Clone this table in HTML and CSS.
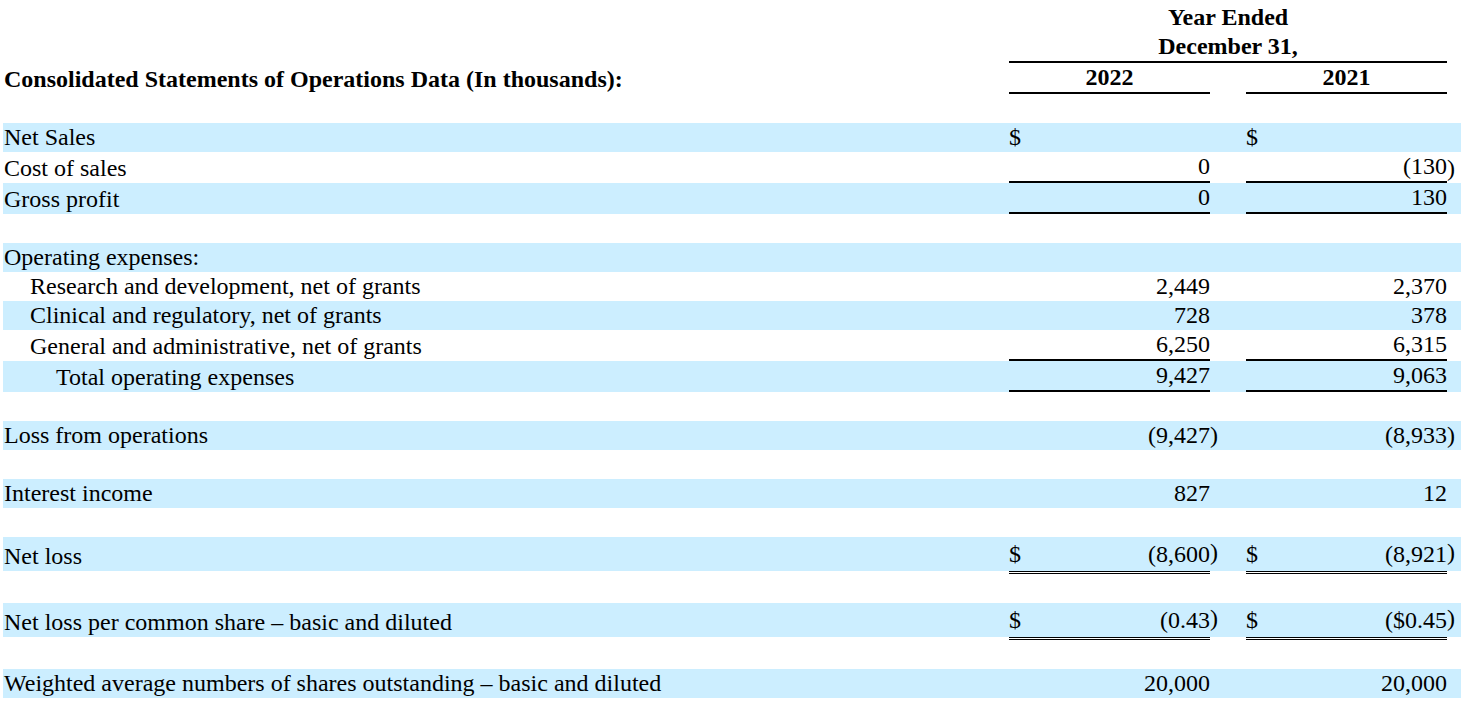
FILE: index.html
```html
<!DOCTYPE html>
<html lang="en">
<head>
<meta charset="utf-8">
<title>Consolidated Statements of Operations Data</title>
<link rel="stylesheet" href="styles.css">
</head>
<body>
<table class="fin">
  <colgroup>
    <col class="c-label">
    <col class="c-cur">
    <col class="c-num">
    <col class="c-par">
    <col class="c-gap">
    <col class="c-cur">
    <col class="c-num">
    <col class="c-par2">
  </colgroup>
  <tbody>
    <tr>
      <td></td>
      <td colspan="6" class="hd">Year Ended</td>
      <td></td>
    </tr>
    <tr>
      <td></td>
      <td colspan="6" class="hd rule">December 31,</td>
      <td></td>
    </tr>
    <tr>
      <td class="title">Consolidated Statements of Operations Data (In thousands):</td>
      <td colspan="2" class="hd rule">2022</td>
      <td></td>
      <td></td>
      <td colspan="2" class="hd rule">2021</td>
      <td></td>
    </tr>
    <tr class="sp"><td colspan="8"></td></tr>

    <tr class="band">
      <td class="lbl">Net Sales</td>
      <td class="cur">$</td><td class="num"></td><td></td>
      <td></td>
      <td class="cur">$</td><td class="num"></td><td></td>
    </tr>
    <tr>
      <td class="lbl">Cost of sales</td>
      <td class="cur rule"></td><td class="num rule">0</td><td></td>
      <td></td>
      <td class="cur rule"></td><td class="num rule">(130</td><td class="par">)</td>
    </tr>
    <tr class="band">
      <td class="lbl">Gross profit</td>
      <td class="cur rule"></td><td class="num rule">0</td><td></td>
      <td></td>
      <td class="cur rule"></td><td class="num rule">130</td><td></td>
    </tr>
    <tr class="sp"><td colspan="8"></td></tr>

    <tr class="band">
      <td class="lbl">Operating expenses:</td>
      <td></td><td></td><td></td><td></td><td></td><td></td><td></td>
    </tr>
    <tr>
      <td class="lbl in1">Research and development, net of grants</td>
      <td class="cur"></td><td class="num">2,449</td><td></td>
      <td></td>
      <td class="cur"></td><td class="num">2,370</td><td></td>
    </tr>
    <tr class="band">
      <td class="lbl in1">Clinical and regulatory, net of grants</td>
      <td class="cur"></td><td class="num">728</td><td></td>
      <td></td>
      <td class="cur"></td><td class="num">378</td><td></td>
    </tr>
    <tr>
      <td class="lbl in1">General and administrative, net of grants</td>
      <td class="cur rule"></td><td class="num rule">6,250</td><td></td>
      <td></td>
      <td class="cur rule"></td><td class="num rule">6,315</td><td></td>
    </tr>
    <tr class="band">
      <td class="lbl in2">Total operating expenses</td>
      <td class="cur rule"></td><td class="num rule">9,427</td><td></td>
      <td></td>
      <td class="cur rule"></td><td class="num rule">9,063</td><td></td>
    </tr>
    <tr class="sp"><td colspan="8"></td></tr>

    <tr class="band">
      <td class="lbl">Loss from operations</td>
      <td class="cur"></td><td class="num">(9,427</td><td class="par">)</td>
      <td></td>
      <td class="cur"></td><td class="num">(8,933</td><td class="par">)</td>
    </tr>
    <tr class="sp"><td colspan="8"></td></tr>

    <tr class="band">
      <td class="lbl">Interest income</td>
      <td class="cur"></td><td class="num">827</td><td></td>
      <td></td>
      <td class="cur"></td><td class="num">12</td><td></td>
    </tr>
    <tr class="sp"><td colspan="8"></td></tr>

    <tr class="band total">
      <td class="lbl">Net loss</td>
      <td class="cur dbl">$</td><td class="num dbl">(8,600</td><td class="par">)</td>
      <td></td>
      <td class="cur dbl">$</td><td class="num dbl">(8,921</td><td class="par">)</td>
    </tr>
    <tr class="sp"><td colspan="8"></td></tr>

    <tr class="band total">
      <td class="lbl">Net loss per common share &ndash; basic and diluted</td>
      <td class="cur dbl">$</td><td class="num dbl">(0.43</td><td class="par">)</td>
      <td></td>
      <td class="cur dbl">$</td><td class="num dbl">($0.45</td><td class="par">)</td>
    </tr>
    <tr class="sp"><td colspan="8"></td></tr>

    <tr class="band">
      <td class="lbl">Weighted average numbers of shares outstanding &ndash; basic and diluted</td>
      <td class="cur"></td><td class="num">20,000</td><td></td>
      <td></td>
      <td class="cur"></td><td class="num">20,000</td><td></td>
    </tr>
  </tbody>
</table>
</body>
</html>
```

FILE: styles.css
```css
html, body {
  background: #ffffff;
}

body {
  margin: 3px 0 0 3px;
  font-family: "Liberation Serif", "Times New Roman", serif;
  font-size: 24px;
  color: #000000;
}

.fin {
  width: 1458px;
  table-layout: fixed;
  border-collapse: separate;
  border-spacing: 0;
}

.c-label { width: 1006px; }
.c-cur   { width: 24px; }
.c-num   { width: 177px; }
.c-par   { width: 8px; }
.c-gap   { width: 28px; }
.c-par2  { width: 14px; }

.fin td {
  padding: 0;
  line-height: 29px;
  height: 29px;
  vertical-align: bottom;
  white-space: nowrap;
  background-clip: padding-box;
}

.band td {
  background-color: #cceeff;
}

.hd {
  font-weight: bold;
  text-align: center;
}

.title {
  font-weight: bold;
  padding-left: 1px !important;
}

.rule {
  border-bottom: 2px solid #000000;
}

.lbl {
  padding-left: 1px !important;
  text-align: left;
}

.in1 { padding-left: 27px !important; }
.in2 { padding-left: 53px !important; }

.cur {
  text-align: left;
}

.num {
  text-align: right;
}

.par {
  text-align: left;
}

/* Total rows: the band stops above the double rule */
.fin .total td {
  border-bottom: 3px solid transparent;
}

.fin .total td.dbl {
  border-bottom: 3px double #000000;
  padding-bottom: 2px;
}

.fin .total td.par {
  padding-top: 1px;
  padding-bottom: 4px;
}
```
